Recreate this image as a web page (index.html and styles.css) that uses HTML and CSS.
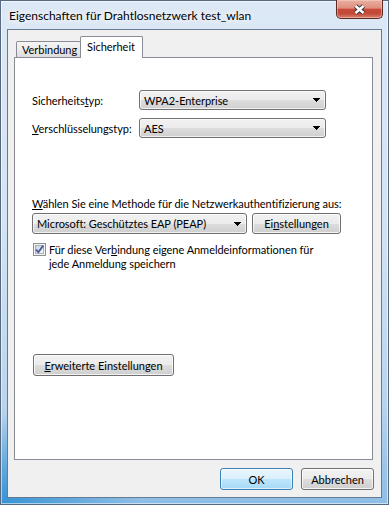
FILE: index.html
```html
<!DOCTYPE html>
<html lang="de">
<head>
<meta charset="utf-8">
<title>Eigenschaften für Drahtlosnetzwerk test_wlan</title>
<link rel="stylesheet" href="styles.css">
</head>
<body>
<div class="window">
  <div class="titlebar">
    <span class="title">Eigenschaften für Drahtlosnetzwerk test_wlan</span>
    <div class="close-btn">
      <svg width="13" height="11" viewBox="0 0 13 11">
        <path d="M2.5 2 L10.5 9 M10.5 2 L2.5 9" stroke="#3a3a3a" stroke-width="4.4" fill="none"/>
        <path d="M2.5 2 L10.5 9 M10.5 2 L2.5 9" stroke="#ffffff" stroke-width="2.4" fill="none"/>
      </svg>
    </div>
  </div>
  <div class="client">
    <div class="tabs">
      <div class="tab tab-conn">Verbindung</div>
      <div class="tab tab-sec active">Sicherheit</div>
    </div>
    <div class="panel">
      <div class="field">
        <span class="label">Sicherheits<u>t</u>yp:</span>
        <div class="combo combo-wide"><span>WPA2-Enterprise</span><svg class="arrow" width="7" height="4" viewBox="0 0 7 4"><path d="M0 0h7v1h-1v1h-1v1h-1v1h-1v-1h-1v-1h-1v-1h-1z" fill="#000"/></svg></div>
      </div>
      <div class="field">
        <span class="label"><u>V</u>erschlüsselungstyp:</span>
        <div class="combo combo-wide"><span>AES</span><svg class="arrow" width="7" height="4" viewBox="0 0 7 4"><path d="M0 0h7v1h-1v1h-1v1h-1v1h-1v-1h-1v-1h-1v-1h-1z" fill="#000"/></svg></div>
      </div>
      <p class="method-label"><u>W</u>ählen Sie eine Methode für die Netzwerkauthentifizierung aus:</p>
      <div class="method-row">
        <div class="combo combo-method"><span>Microsoft: Geschütztes EAP (PEAP)</span><svg class="arrow" width="7" height="4" viewBox="0 0 7 4"><path d="M0 0h7v1h-1v1h-1v1h-1v1h-1v-1h-1v-1h-1v-1h-1z" fill="#000"/></svg></div>
        <button class="btn btn-settings">Ei<u>n</u>stellungen</button>
      </div>
      <div class="check-row">
        <span class="checkbox">
          <svg width="13" height="13" viewBox="0 0 13 13">
            <defs><linearGradient id="cbg" x1="0" y1="0" x2="1" y2="1"><stop offset="0" stop-color="#cdd3dc"/><stop offset="1" stop-color="#f7f8fa"/></linearGradient></defs>
            <rect x="0.5" y="0.5" width="12" height="12" fill="#f4f4f4" stroke="#8e8f8f"/>
            <rect x="2.5" y="2.5" width="8" height="8" fill="url(#cbg)" stroke="#a9b0bb"/>
            <path d="M3 6.5 L5.3 9.2 L10.2 2.6" stroke="#4a5e9a" stroke-width="1.9" fill="none" stroke-linejoin="round"/>
          </svg>
        </span>
        <span class="check-text">Für diese Ver<u>b</u>indung eigene Anmeldeinformationen für<br>jede Anmeldung speichern</span>
      </div>
      <button class="btn btn-adv"><u>E</u>rweiterte Einstellungen</button>
    </div>
    <div class="footer">
      <button class="btn btn-default">OK</button>
      <button class="btn">Abbrechen</button>
    </div>
  </div>
</div>
</body>
</html>
```

FILE: styles.css
```css
* { box-sizing: border-box; }
html, body { margin: 0; padding: 0; }
body {
  width: 389px;
  height: 505px;
  overflow: hidden;
  font-family: Lato, "Noto Sans", sans-serif;
  font-size: 11px;
  letter-spacing: -0.04px;
  color: #000;
  background: #fff;
}
u { text-decoration: underline; text-underline-offset: 1px; }

.window {
  width: 389px;
  height: 505px;
  border: 1px solid #56697f;
  padding: 0 6px 6px 6px;
  display: flex;
  flex-direction: column;
  background:
    radial-gradient(ellipse 140px 90px at 0% 100%, rgba(40,140,210,0.85), rgba(40,140,210,0) 100%),
    linear-gradient(180deg, #dce8f5 0%, #d3e3f3 45%, #b9d4ee 80%, #8dbde6 100%);
  box-shadow: inset 0 0 0 1px rgba(255,255,255,0.55);
}

.titlebar {
  height: 28px;
  flex: none;
  display: flex;
  justify-content: space-between;
  align-items: flex-start;
}
.title {
  font-size: 12px;
  letter-spacing: 0;
  margin: 7px 0 0 2px;
  line-height: 15px;
  text-shadow: 0 0 6px #fff, 0 0 10px #fff, 0 0 14px rgba(255,255,255,0.9);
}
.close-btn {
  width: 47px;
  height: 19px;
  margin-top: -1px;
  margin-right: -1px;
  border: 1px solid #5c2a23;
  border-top: none;
  border-radius: 0 0 5px 5px;
  background: linear-gradient(180deg, #eab0a2 0%, #df8e7d 45%, #c8483a 52%, #c14a39 75%, #d9806a 100%);
  box-shadow: inset 0 0 0 1px rgba(255,220,210,0.45);
  display: flex;
  align-items: center;
  justify-content: center;
}

.client {
  flex: 1;
  border: 1px solid #667a90;
  background: #f0f0f0;
  padding: 6px 8px 7px 6px;
  display: flex;
  flex-direction: column;
}

.tabs {
  height: 21px;
  flex: none;
  display: flex;
  align-items: flex-end;
  padding-left: 2px;
}
.tab {
  height: 16px;
  border: 1px solid #898c95;
  border-bottom: none;
  border-radius: 2px 2px 0 0;
  background: linear-gradient(180deg, #f5f5f5 0%, #ebebeb 50%, #dcdcdc 100%);
  line-height: 15px;
  white-space: nowrap;
}
.tab-conn { width: 65px; padding-left: 5px; }
.tab-sec {
  width: 63px;
  padding-left: 6px;
  height: 22px;
  margin-bottom: -1px;
  margin-left: -1px;
  background: #fff;
  line-height: 20px;
  position: relative;
  z-index: 1;
}

.panel {
  height: 403px;
  flex: none;
  border: 1px solid #898c95;
  background: #fff;
  padding: 32px 0 0 17px;
  display: flex;
  flex-direction: column;
  align-items: flex-start;
}

.field {
  display: flex;
  align-items: center;
  height: 20px;
}
.field + .field { margin-top: 8px; }
.label { width: 107px; white-space: nowrap; }

.combo {
  height: 20px;
  border: 1px solid #707070;
  border-radius: 3px;
  background: linear-gradient(180deg, #f2f2f2 0%, #ebebeb 50%, #dddddd 51%, #cfcfcf 100%);
  box-shadow: inset 0 0 0 1px rgba(255,255,255,0.7);
  display: flex;
  align-items: center;
  justify-content: space-between;
  padding: 0 5px 0 4px;
  white-space: nowrap;
}
.combo-wide { width: 187px; }
.combo-method { width: 215px; height: 21px; }
.arrow { flex: none; display: block; }

.method-label {
  margin: 58px 0 2px 0;
  line-height: 15px;
  white-space: nowrap;
}
.method-row {
  display: flex;
  gap: 5px;
  height: 21px;
}

.btn {
  font: inherit;
  color: #000;
  height: 21px;
  border: 1px solid #707070;
  border-radius: 3px;
  background: linear-gradient(180deg, #f2f2f2 0%, #ebebeb 50%, #dddddd 51%, #cfcfcf 100%);
  box-shadow: inset 0 0 0 1px rgba(255,255,255,0.75);
  padding: 0;
  margin: 0;
  white-space: nowrap;
}
.btn-settings { width: 89px; }

.check-row {
  margin: 9px 0 0 1px;
  display: flex;
  align-items: flex-start;
  gap: 3px;
}
.checkbox { display: block; width: 13px; height: 13px; flex: none; }
.checkbox svg { display: block; }
.check-text { line-height: 13.5px; margin-top: 0; }

.btn-adv {
  margin: 84px 0 0 1px;
  width: 141px;
  height: 22px;
}

.footer {
  margin: 8px -1px 0 0;
  display: flex;
  justify-content: flex-end;
  gap: 8px;
}
.footer .btn { width: 73px; height: 22px; }
.btn-default {
  border-color: #3c7fb1;
  background: linear-gradient(180deg, #eaf6fd 0%, #d9f0fc 50%, #bee6fd 51%, #a7d9f5 100%);
  box-shadow: inset 0 0 0 1px rgba(255,255,255,0.6);
}
```
